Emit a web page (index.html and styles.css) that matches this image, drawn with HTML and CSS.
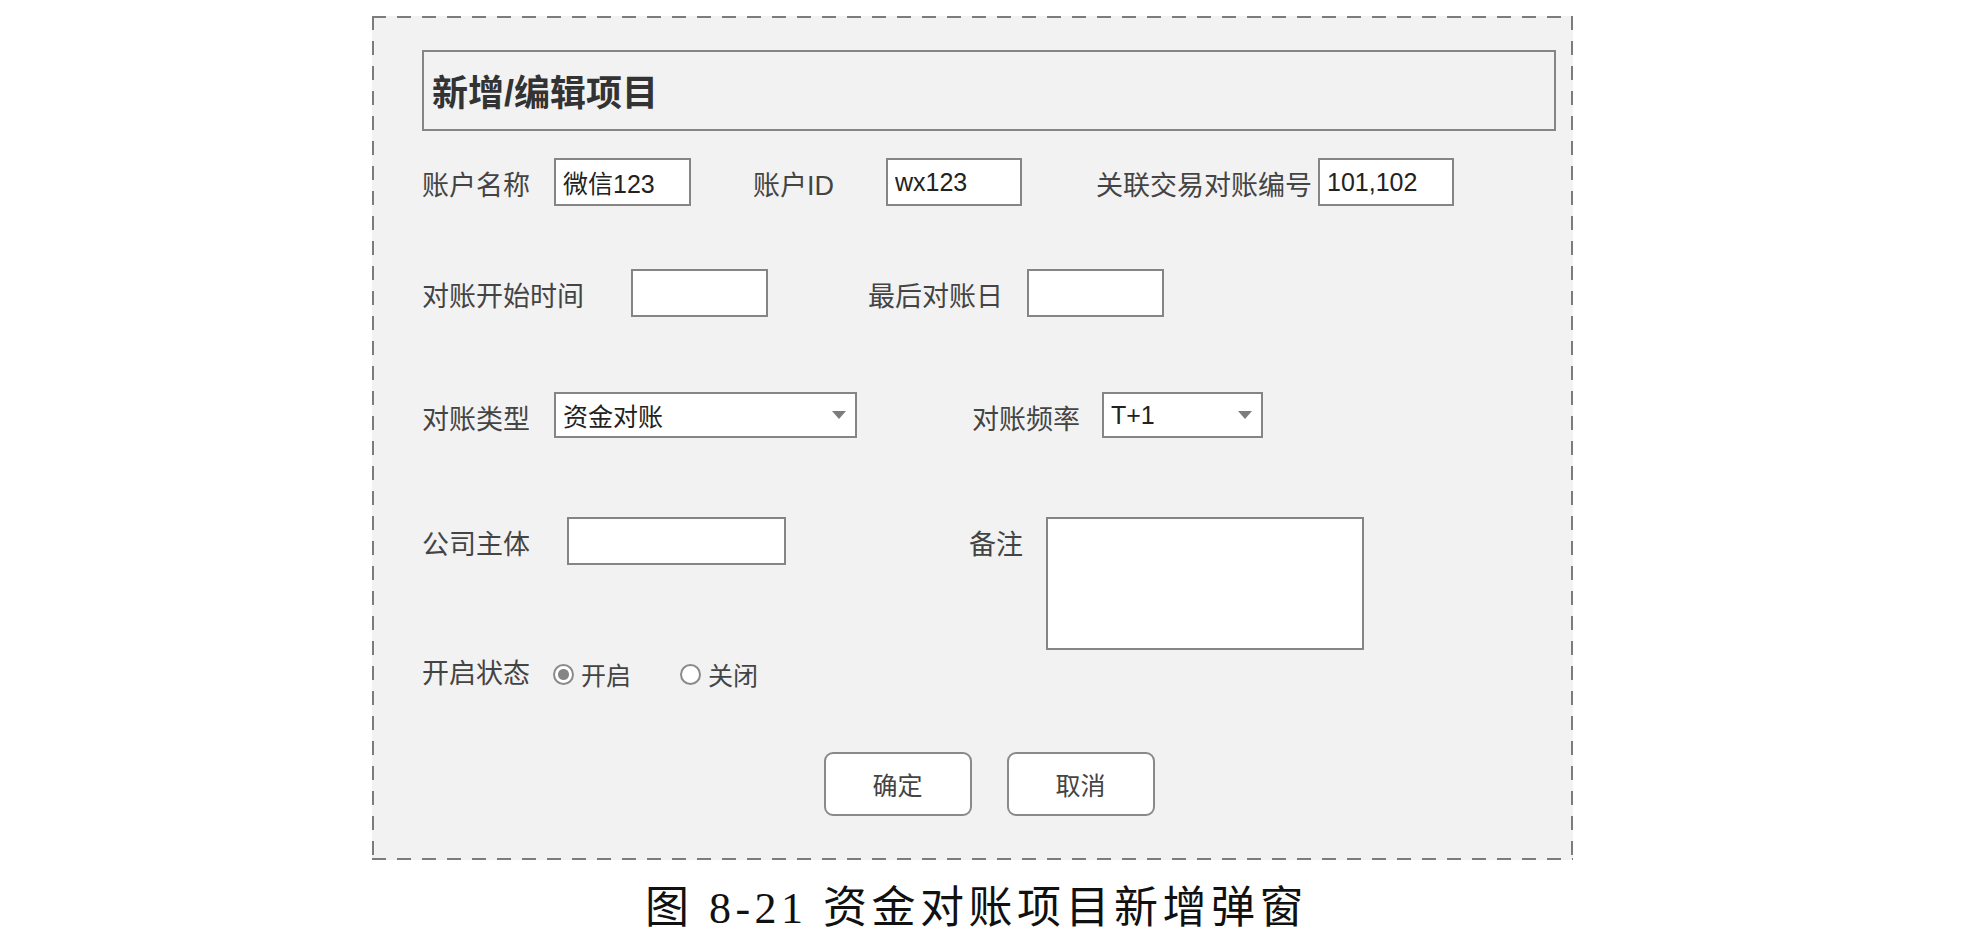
FILE: index.html
```html
<!DOCTYPE html>
<html lang="zh-CN">
<head>
  <meta charset="UTF-8">
  <title>资金对账项目新增弹窗</title>
  <link rel="stylesheet" href="styles.css">
</head>
<body>
  <div class="frame">
    <div class="title-box">新增/编辑项目</div>

    <div class="row row-1">
      <label class="lbl w-132">账户名称</label>
      <input class="ipt w-137" type="text" value="微信123">
      <label class="lbl ml-62 w-133">账户ID</label>
      <input class="ipt w-136" type="text" value="wx123">
      <label class="lbl ml-74 w-222">关联交易对账编号</label>
      <input class="ipt w-136" type="text" value="101,102">
    </div>

    <div class="row row-2">
      <label class="lbl w-209">对账开始时间</label>
      <input class="ipt w-137" type="text">
      <label class="lbl ml-100 w-159">最后对账日</label>
      <input class="ipt w-137" type="text">
    </div>

    <div class="row row-3">
      <label class="lbl w-132">对账类型</label>
      <div class="select w-303">
        <span>资金对账</span>
        <svg class="caret" width="14" height="8" viewBox="0 0 14 8"><polygon points="0,0 14,0 7,8"/></svg>
      </div>
      <label class="lbl ml-115 w-130">对账频率</label>
      <div class="select w-161">
        <span>T+1</span>
        <svg class="caret" width="14" height="8" viewBox="0 0 14 8"><polygon points="0,0 14,0 7,8"/></svg>
      </div>
    </div>

    <div class="row row-4">
      <label class="lbl w-145">公司主体</label>
      <input class="ipt w-219" type="text">
      <label class="lbl ml-183 w-77">备注</label>
      <textarea class="memo"></textarea>
    </div>

    <div class="row row-5">
      <label class="lbl-status w-131">开启状态</label>
      <span class="option"><span class="radio on"></span>开启</span>
      <span class="option ml-49"><span class="radio"></span>关闭</span>
    </div>

    <div class="actions">
      <button class="btn">确定</button>
      <button class="btn">取消</button>
    </div>
  </div>

  <p class="caption">图 8-21 资金对账项目新增弹窗</p>
</body>
</html>
```

FILE: styles.css
```css
body {
  margin: 0;
  background-color: #fff;
  font-family: "Liberation Sans", "Noto Sans CJK SC", sans-serif;
  color: #444;
}

/* dashed outer frame */
.frame {
  box-sizing: border-box;
  width: 1201px;
  margin: 16px 0 0 372px;
  padding: 34px 17px 44px 50px;
  background:
    repeating-linear-gradient(to right, #7c7c7c 0 14px, transparent 14px 25px) left top / 100% 2px no-repeat,
    repeating-linear-gradient(to right, #7c7c7c 0 14px, transparent 14px 25px) left bottom / 100% 2px no-repeat,
    repeating-linear-gradient(to bottom, #7c7c7c 0 14px, transparent 14px 25px) left top / 2px 100% no-repeat,
    repeating-linear-gradient(to bottom, #7c7c7c 0 14px, transparent 14px 25px) right top / 2px 100% no-repeat,
    #f2f2f2;
}

.title-box {
  box-sizing: border-box;
  height: 81px;
  padding: 6px 8px 0;
  border: 2px solid #858585;
  font-size: 36px;
  font-weight: bold;
  line-height: 71px;
  color: #333;
}

.row {
  display: flex;
  align-items: flex-start;
}

.row-1 { margin-top: 27px; }
.row-2 { margin-top: 63px; }
.row-3 { margin-top: 75px; }
.row-4 { margin-top: 79px; }
.row-5 {
  margin-top: 4px;
  height: 40px;
  align-items: center;
}

.lbl {
  flex: none;
  margin-top: 15px;
  font-size: 27px;
  line-height: 27px;
  white-space: nowrap;
  color: #444;
}

.lbl-status {
  flex: none;
  font-size: 27px;
  line-height: 40px;
  white-space: nowrap;
}

.ipt {
  box-sizing: border-box;
  flex: none;
  height: 48px;
  margin: 0;
  padding: 0 7px;
  border: 2px solid #858585;
  border-radius: 0;
  background-color: #fff;
  font-family: "Liberation Sans", "Noto Sans CJK SC", sans-serif;
  font-size: 25px;
  color: #222;
  outline: none;
}

.select {
  box-sizing: border-box;
  flex: none;
  display: flex;
  align-items: center;
  justify-content: space-between;
  height: 46px;
  padding: 0 9px 0 7px;
  border: 2px solid #858585;
  background-color: #fff;
  font-size: 25px;
  color: #222;
}

.caret {
  fill: #7c7c7c;
}

.memo {
  box-sizing: border-box;
  flex: none;
  width: 318px;
  height: 133px;
  margin: 0;
  border: 2px solid #858585;
  background-color: #fff;
  resize: none;
  outline: none;
}

.option {
  display: flex;
  align-items: center;
  font-size: 25px;
  color: #444;
}

.radio {
  box-sizing: border-box;
  width: 21px;
  height: 21px;
  margin-right: 7px;
  border: 2px solid #8a8a8a;
  border-radius: 50%;
  background-color: #fff;
}

.radio.on {
  background: radial-gradient(circle, #858585 0 5px, #fff 6px);
}

.actions {
  display: flex;
  justify-content: center;
  gap: 35px;
  margin-top: 58px;
}

.btn {
  width: 148px;
  height: 64px;
  border: 2px solid #8a8a8a;
  border-radius: 9px;
  background-color: #fff;
  font-family: "Liberation Sans", "Noto Sans CJK SC", sans-serif;
  font-size: 25px;
  color: #444;
  cursor: pointer;
}

.caption {
  box-sizing: border-box;
  width: 1201px;
  margin: 21px 0 0 372px;
  padding-left: 8px;
  text-align: center;
  font-family: "Liberation Serif", "Noto Sans CJK SC", serif;
  font-size: 44px;
  line-height: 56px;
  letter-spacing: 4.5px;
  color: #111;
}

/* widths and offsets */
.w-77 { width: 77px; }
.w-130 { width: 130px; }
.w-131 { width: 131px; }
.w-132 { width: 132px; }
.w-133 { width: 133px; }
.w-136 { width: 136px; }
.w-137 { width: 137px; }
.w-145 { width: 145px; }
.w-159 { width: 159px; }
.w-161 { width: 161px; }
.w-209 { width: 209px; }
.w-219 { width: 219px; }
.w-222 { width: 222px; }
.w-303 { width: 303px; }

.ml-49 { margin-left: 49px; }
.ml-62 { margin-left: 62px; }
.ml-74 { margin-left: 74px; }
.ml-100 { margin-left: 100px; }
.ml-115 { margin-left: 115px; }
.ml-183 { margin-left: 183px; }
```
